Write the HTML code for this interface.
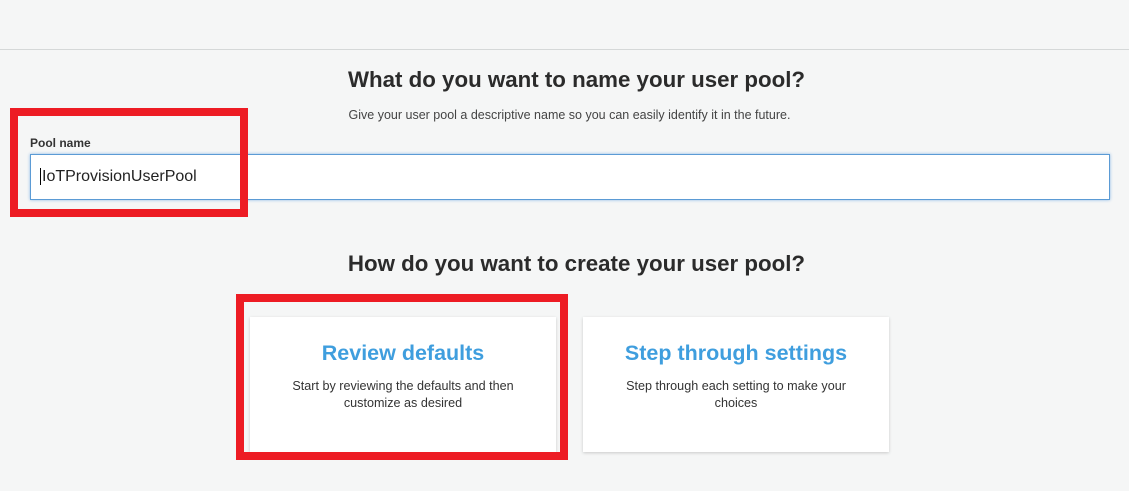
<!DOCTYPE html>
<html><head><style>
body{margin:0;width:1129px;height:491px;background:#f5f6f6;font-family:"Liberation Sans",Arial,sans-serif;position:relative;overflow:hidden;color:#222}
.a{position:absolute}
.hr{left:0;top:49px;width:1129px;height:1px;background:#d5d8d8}
h2{margin:0;font-size:22.3px;font-weight:bold;color:#2b2b2b;text-align:center;width:1129px;left:0}
.card{background:#fff;box-shadow:0 1px 3px rgba(0,0,0,.18);text-align:center}
.card .t{font-size:21.5px;font-weight:bold;color:#3f9ede;margin-top:24px}
.card .d{font-size:12.6px;color:#333;margin:12px auto 0;width:260px;line-height:17px}
.red{border:8px solid #ed1c24;box-sizing:border-box}
</style></head><body>
<div class="a hr"></div>
<h2 class="a" style="top:67px;left:12px">What do you want to name your user pool?</h2>
<div class="a" style="top:108px;left:0;width:1129px;text-align:center;font-size:12.5px;color:#444;padding-left:10px;box-sizing:border-box">Give your user pool a descriptive name so you can easily identify it in the future.</div>
<div class="a" style="left:30px;top:136px;font-size:12px;font-weight:bold;color:#333">Pool name</div>
<div class="a" style="left:30px;top:154px;width:1080px;height:46px;box-sizing:border-box;border:1px solid #5b9bd5;box-shadow:0 0 3px #8ab8e6;background:#fff;font-size:16px;line-height:44px;padding-left:9px;color:#222"><span style="border-left:1px solid #000;padding-left:1px">IoTProvisionUserPool</span></div>
<div class="a red" style="left:10px;top:108px;width:238px;height:109px"></div>
<h2 class="a" style="top:251px;left:12px">How do you want to create your user pool?</h2>
<div class="a card" style="left:250px;top:317px;width:306px;height:135px"><div class="t">Review defaults</div><div class="d">Start by reviewing the defaults and then customize as desired</div></div>
<div class="a card" style="left:583px;top:317px;width:306px;height:135px"><div class="t">Step through settings</div><div class="d">Step through each setting to make your choices</div></div>
<div class="a red" style="left:236px;top:294px;width:332px;height:166px"></div>
</body></html>
